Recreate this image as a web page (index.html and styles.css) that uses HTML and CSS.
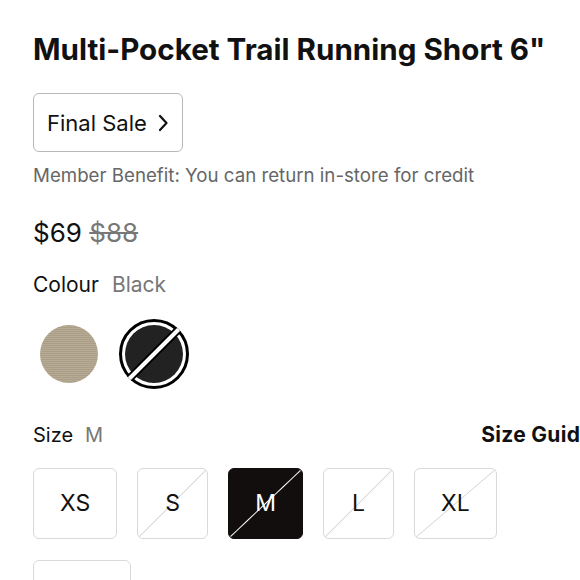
FILE: index.html
```html
<!DOCTYPE html>
<html lang="en">
<head>
<meta charset="utf-8">
<title>Multi-Pocket Trail Running Short 6"</title>
<link rel="stylesheet" href="styles.css">
</head>
<body>
<main class="product">
  <h1 class="title">Multi-Pocket Trail Running Short 6"</h1>
  <button class="final-sale" type="button">
    <span>Final Sale</span>
    <svg class="chevron" width="10" height="18" viewBox="0 0 10 18" aria-hidden="true"><path d="M2 2 L8.5 9 L2 16" fill="none" stroke="#111" stroke-width="2.2" stroke-linecap="round" stroke-linejoin="round"/></svg>
  </button>
  <p class="benefit">Member Benefit: You can return in-store for credit</p>
  <div class="price"><span class="now">$69</span> <s class="was">$88</s></div>
  <div class="label-row"><span>Colour</span><span class="value">Black</span></div>
  <div class="swatches">
    <button class="swatch" type="button" aria-label="Beige"><span class="dot beige"></span></button>
    <button class="swatch selected" type="button" aria-label="Black">
      <svg width="72" height="72" viewBox="0 0 72 72" aria-hidden="true">
        <defs><clipPath id="c"><circle cx="36" cy="36" r="35"/></clipPath></defs>
        <circle cx="36" cy="36" r="33.5" fill="#fff" stroke="#000" stroke-width="3"/>
        <circle cx="36" cy="36" r="29" fill="#222"/>
        <g clip-path="url(#c)">
          <line x1="6" y1="66" x2="66" y2="6" stroke="#000" stroke-width="8"/>
          <line x1="6" y1="66" x2="66" y2="6" stroke="#fff" stroke-width="4"/>
        </g>
      </svg>
    </button>
  </div>
  <div class="size-head">
    <div class="label-row"><span>Size</span><span class="value">M</span></div>
    <a class="guide" href="#">Size Guide</a>
  </div>
  <div class="sizes">
    <button class="size" type="button">XS</button>
    <button class="size out" type="button">S</button>
    <button class="size out selected" type="button">M</button>
    <button class="size out" type="button">L</button>
    <button class="size out" type="button">XL</button>
    <button class="size" type="button">XXL</button>
  </div>
</main>
</body>
</html>
```
FILE: styles.css
```css
html, body {
  margin: 0;
  padding: 0;
  background: #fff;
  overflow: hidden;
}
body {
  font-family: Inter, "Liberation Sans", Arial, sans-serif;
  color: #111;
}
.product {
  width: 560px;
  padding: 32px 0 0 33px;
  display: flex;
  flex-direction: column;
  align-items: flex-start;
}
.title {
  margin: 0;
  font-size: 29.6px;
  line-height: 34px;
  font-weight: 700;
  letter-spacing: 0;
  white-space: nowrap;
}
.final-sale {
  margin-top: 27px;
  height: 59px;
  width: 150px;
  box-sizing: border-box;
  display: inline-flex;
  align-items: center;
  gap: 11px;
  padding: 0 0 0 13px;
  border: 1.5px solid #b8b8b8;
  border-radius: 6px;
  background: #fff;
  font-family: inherit;
  font-size: 22px;
  color: #111;
}
.benefit {
  margin: 11.5px 0 0;
  font-size: 18.7px;
  line-height: 24px;
  color: #666;
}
.price {
  margin-top: 29px;
  font-size: 26px;
  line-height: 32px;
}
.price .was {
  color: #777;
}
.label-row {
  display: flex;
  gap: 13px;
  font-size: 21px;
  line-height: 26px;
}
.product > .label-row {
  margin-top: 23px;
}
.label-row .value {
  color: #777;
}
.swatches {
  margin-top: 20px;
  display: flex;
  gap: 13px;
}
.swatch {
  width: 72px;
  height: 72px;
  padding: 0;
  border: 0;
  background: none;
  display: flex;
  align-items: center;
  justify-content: center;
}
.swatch svg { display: block; }
.dot {
  width: 58px;
  height: 58px;
  border-radius: 50%;
}
.dot.beige {
  background-color: #b3a68e;
  background-image: repeating-linear-gradient(0deg, rgba(255,255,255,0.06) 0 1px, rgba(0,0,0,0.05) 1px 2px);
}
.size-head {
  margin-top: 32px;
  align-self: stretch;
  display: flex;
  justify-content: space-between;
  align-items: baseline;
}
.size-head .label-row {
  font-size: 20px;
  gap: 12px;
}
.guide {
  font-size: 21px;
  line-height: 26px;
  font-weight: 700;
  letter-spacing: 0.3px;
  color: #111;
  text-decoration: none;
}
.sizes {
  margin-top: 20px;
  display: flex;
  flex-wrap: wrap;
  gap: 21px 20px;
}
.size {
  height: 71px;
  min-width: 71px;
  box-sizing: border-box;
  padding: 0 26px;
  border: 1.5px solid #d9d9d9;
  border-radius: 6px;
  background: #fff;
  font-family: inherit;
  font-size: 23px;
  color: #111;
}
.size.out {
  background-image: linear-gradient(to bottom right, transparent calc(50% - 0.8px), #d4d4d4 50%, transparent calc(50% + 0.8px));
}
.size.selected {
  background-color: #130e0e;
  border-color: #130e0e;
  color: #fff;
  background-image: linear-gradient(to bottom right, transparent calc(50% - 1px), #fff 50%, transparent calc(50% + 1px));
}
```
